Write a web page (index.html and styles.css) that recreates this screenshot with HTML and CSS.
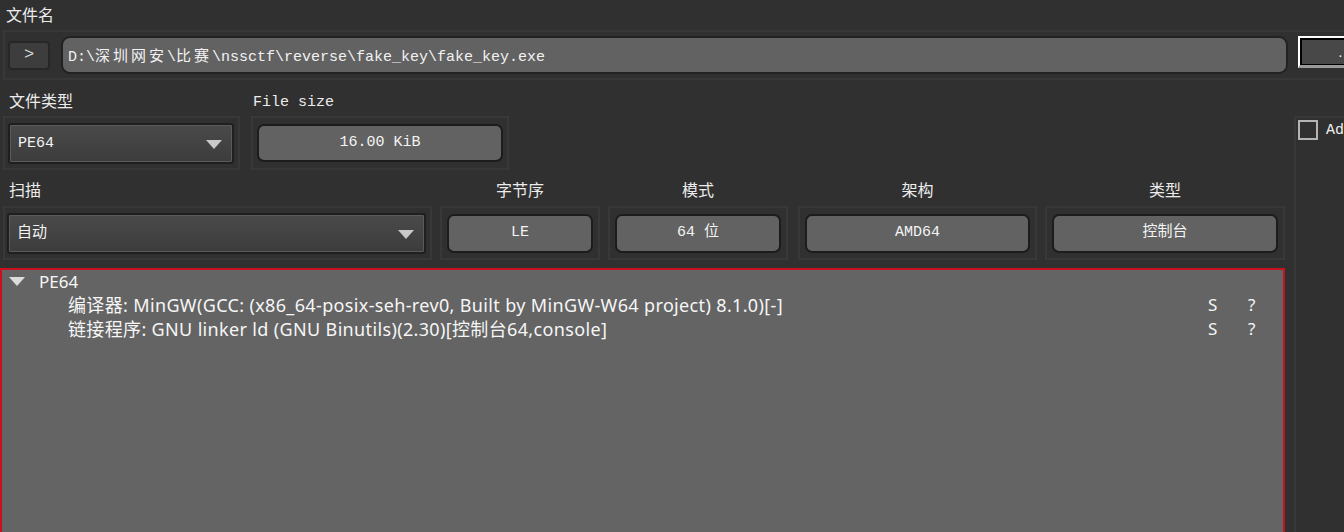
FILE: index.html
```html
<!DOCTYPE html>
<html>
<head>
<meta charset="utf-8">
<link rel="stylesheet" href="styles.css">
</head>
<body>
<div class="page">
  <div class="label fname-label">文件名</div>
  <div class="group fname-group">
    <div class="btn-small">&gt;</div>
    <div class="path-field">D:\<span class="cjk">深圳网安</span>\<span class="cjk">比赛</span>\nssctf\reverse\fake_key\fake_key.exe</div>
    <div class="focus-btn"><span class="dots">.</span></div>
  </div>
  <div class="lower">
    <div class="left-col">
      <div class="row2">
        <div class="col col-type">
          <div class="label">文件类型</div>
          <div class="group g-type">
            <div class="combo">PE64<span class="arrow"></span></div>
          </div>
        </div>
        <div class="col col-size">
          <div class="label mono">File size</div>
          <div class="group g-size">
            <div class="pbtn">16.00 KiB</div>
          </div>
        </div>
      </div>
      <div class="row3">
        <div class="col col-scan">
          <div class="label">扫描</div>
          <div class="group g-scan">
            <div class="combo">自动<span class="arrow"></span></div>
          </div>
        </div>
        <div class="col col-endian">
          <div class="label center">字节序</div>
          <div class="group g-info"><div class="pbtn">LE</div></div>
        </div>
        <div class="col col-mode">
          <div class="label center">模式</div>
          <div class="group g-info"><div class="pbtn">64 位</div></div>
        </div>
        <div class="col col-arch">
          <div class="label center">架构</div>
          <div class="group g-info"><div class="pbtn">AMD64</div></div>
        </div>
        <div class="col col-kind">
          <div class="label center">类型</div>
          <div class="group g-info"><div class="pbtn">控制台</div></div>
        </div>
      </div>
      <div class="tree">
        <div class="tree-root"><span class="tri"></span><span>PE64</span></div>
        <div class="tree-item"><span class="txt">编译器: MinGW(GCC: (x86_64-posix-seh-rev0, Built by MinGW-W64 project) 8.1.0)[-]</span><span class="s">S</span><span class="q">?</span></div>
        <div class="tree-item"><span class="txt">链接程序: GNU linker ld (GNU Binutils)(2.30)[控制台64,console]</span><span class="s">S</span><span class="q">?</span></div>
      </div>
    </div>
    <div class="right-panel">
      <div class="chk-row"><span class="chk"></span><span class="chk-label">Ad</span></div>
    </div>
  </div>
</div>
</body>
</html>
```

FILE: styles.css
```css
* { box-sizing: border-box; }
html, body { margin: 0; padding: 0; }
body {
  background: #303030;
  color: #ececec;
  font-family: "Noto Sans", "Noto Sans CJK SC", sans-serif;
  width: 1344px;
  height: 532px;
  overflow: hidden;
}
.page { display: flex; flex-direction: column; height: 532px; }
.label {
  font-family: "Noto Sans CJK SC", sans-serif;
  font-size: 16px;
  line-height: 20px;
  color: #ececec;
  padding-left: 6px;
  height: 24px;
  white-space: nowrap;
}
.label.mono { font-family: "Liberation Mono", "Noto Sans CJK SC", monospace; font-size: 15px; padding-left: 2px; padding-top: 3px; }
.label.center { text-align: center; padding-left: 0; }
.fname-label { padding-top: 4px; height: 30px; }
.group {
  border: 2px solid #383838;
  background: #303030;
}
.fname-group {
  margin-left: 3px;
  height: 50px;
  display: flex;
  align-items: center;
  padding-left: 3px;
  border-right: none;
}
.btn-small {
  width: 42px;
  height: 29px;
  border: 2px solid #272727;
  border-radius: 4px;
  background: #3d3d3d;
  color: #d6d6d6;
  font-family: "Liberation Mono", monospace;
  font-size: 17px;
  line-height: 24px;
  text-align: center;
}
.path-field {
  margin-left: 11px;
  width: 1227px;
  height: 38px;
  border: 2px solid #222;
  border-radius: 9px;
  background: #626262;
  font-family: "Liberation Mono", "Noto Sans CJK SC", monospace;
  font-size: 15px;
  line-height: 34px;
  padding-left: 5px;
  color: #f2f2f2;
  white-space: nowrap;
}
.cjk { font-family: "Noto Sans CJK SC", sans-serif; letter-spacing: 3px; }
.focus-btn {
  margin-left: 10px;
  flex: 1;
  height: 32px;
  margin-top: -6px;
  border: 2px solid #fff;
  border-right: none;
  border-bottom: 3px solid #9a9a9a;
  background: #484848;
  box-shadow: inset 2px 2px 0 #000, inset 0 -1px 0 #000;
  position: relative;
}
.dots { position: absolute; right: 2px; top: 6px; color: #fff; font-size: 12px; }
.lower { display: flex; flex: 1; margin-top: 10px; }
.left-col { width: 1285px; display: flex; flex-direction: column; }
.row2 { display: flex; gap: 11px; height: 82px; padding-left: 3px; }
.col { display: flex; flex-direction: column; }
.col-type { width: 237px; }
.col-size { width: 258px; }
.row2 .label { height: 26px; }
.g-type, .g-size { height: 54px; display: flex; align-items: center; padding: 0 4px; }
.g-type { padding-left: 3px; }
.combo {
  width: 100%;
  height: 41px;
  border: 2px solid #1f1f1f;
  border-radius: 3px;
  background: linear-gradient(#4a4a4a, #3c3c3c);
  box-shadow: inset 0 0 0 1px #5a5a5a;
  font-family: "Liberation Mono", "Noto Sans CJK SC", monospace;
  font-size: 15px;
  line-height: 37px;
  padding-left: 8px;
  color: #f4f4f4;
  position: relative;
}
.arrow {
  position: absolute;
  right: 10px;
  top: 15px;
  width: 0; height: 0;
  border-left: 8px solid transparent;
  border-right: 8px solid transparent;
  border-top: 9px solid #c9c9c9;
}
.pbtn {
  width: 100%;
  height: 38px;
  border: 2px solid #1c1c1c;
  border-radius: 7px;
  background: #626262;
  text-align: center;
  font-family: "Liberation Mono", "Noto Sans CJK SC", monospace;
  font-size: 15px;
  line-height: 34px;
  color: #f4f4f4;
}
.row3 { display: flex; height: 96px; padding-left: 3px; }
.row3 .label { height: 34px; padding-top: 7px; }
.col-scan { width: 429px; }
.col-endian { width: 160px; margin-left: 8px; }
.col-mode { width: 180px; margin-left: 8px; }
.col-arch { width: 239px; margin-left: 10px; }
.col-kind { width: 240px; margin-left: 8px; }
.g-scan { height: 54px; display: flex; align-items: center; padding: 0 4px 0 2px; }
.g-info { height: 54px; display: flex; align-items: center; padding: 0 5px; }
.g-info .pbtn { height: 39px; }
.tree {
  flex: 1;
  border: 2px solid #c8101e;
  border-bottom: none;
  background: #646464;
  padding-top: 0;
  font-family: "Noto Sans", "Noto Sans CJK SC", sans-serif;
  font-size: 18px;
  color: #f6f6f6;
}
.tree-root { display: flex; align-items: center; height: 23px; font-size: 17px; }
.tri {
  width: 0; height: 0;
  margin-left: 7px;
  margin-right: 14px;
  border-left: 8px solid transparent;
  border-right: 8px solid transparent;
  border-top: 9px solid #dcdcdc;
}
.tree-item { display: flex; height: 24px; line-height: 24px; padding-left: 66px; position: relative; white-space: nowrap; }
.tree-item .txt { letter-spacing: 0.35px; }
.tree-item .s { position: absolute; left: 1206px; font-size: 17px; }
.tree-item .q { position: absolute; left: 1246px; font-size: 17px; }
.right-panel {
  flex: 1;
  margin-left: 9px;
  margin-top: 26px;
  border-left: 2px solid #383838;
  border-top: 2px solid #383838;
}
.chk-row { display: flex; align-items: center; padding: 2px 0 0 2px; }
.chk { width: 20px; height: 20px; border: 2px solid #b4b4b4; }
.chk-label { margin-left: 8px; font-family: "Liberation Mono", monospace; font-size: 15px; color: #eee; }
```
